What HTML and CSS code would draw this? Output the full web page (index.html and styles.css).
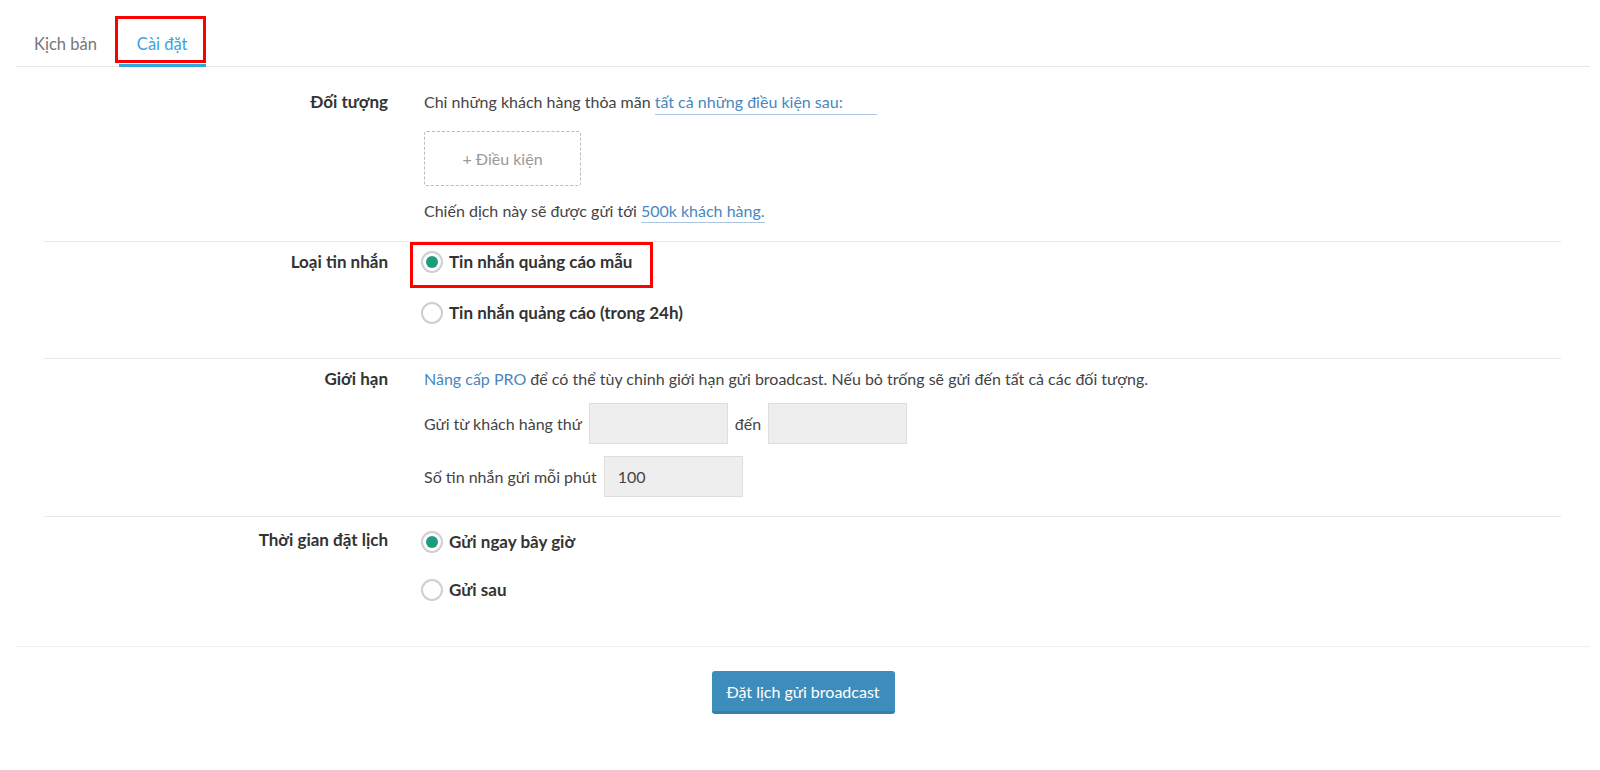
FILE: index.html
```html
<!DOCTYPE html>
<html lang="vi">
<head>
    <meta charset="UTF-8">
    <meta name="viewport" content="width=device-width, initial-scale=1.0">
    <title>Cài đặt broadcast</title>
    <link rel="stylesheet" href="styles.css">
</head>
<body>
    <div class="page">
        <div class="tabs">
            <div class="tab">Kịch bản</div>
            <div class="tab active marked-tab">Cài đặt</div>
        </div>

        <div class="settings">
            <div class="row row-first">
                <div class="row-label">Đối tượng</div>
                <div class="row-body">
                    <div class="line">Chỉ những khách hàng thỏa mãn <span class="link link-wide">tất cả những điều kiện sau:</span></div>
                    <div class="add-condition">+ Điều kiện</div>
                    <div class="line">Chiến dịch này sẽ được gửi tới <span class="link">500k khách hàng.</span></div>
                </div>
            </div>

            <div class="row row-type">
                <div class="row-label">Loại tin nhắn</div>
                <div class="row-body">
                    <div class="radio checked marked-radio"><span class="dot"></span>Tin nhắn quảng cáo mẫu</div>
                    <div class="radio"><span class="dot"></span>Tin nhắn quảng cáo (trong 24h)</div>
                </div>
            </div>

            <div class="row row-limit">
                <div class="row-label">Giới hạn</div>
                <div class="row-body">
                    <div class="line"><span class="plain-link">Nâng cấp PRO</span> để có thể tùy chỉnh giới hạn gửi broadcast. Nếu bỏ trống sẽ gửi đến tất cả các đối tượng.</div>
                    <div class="field-line">
                        <span>Gửi từ khách hàng thứ</span>
                        <div class="input"></div>
                        <span>đến</span>
                        <div class="input"></div>
                    </div>
                    <div class="field-line">
                        <span>Số tin nhắn gửi mỗi phút</span>
                        <div class="input">100</div>
                    </div>
                </div>
            </div>

            <div class="row row-time">
                <div class="row-label">Thời gian đặt lịch</div>
                <div class="row-body">
                    <div class="radio checked"><span class="dot"></span>Gửi ngay bây giờ</div>
                    <div class="radio"><span class="dot"></span>Gửi sau</div>
                </div>
            </div>
        </div>

        <div class="footer">
            <button class="btn-primary">Đặt lịch gửi broadcast</button>
        </div>
    </div>
</body>
</html>
```

FILE: styles.css
```css
body {
    margin: 0;
    font-family: "Lato", "Liberation Sans", sans-serif;
    font-size: 16px;
    color: #444;
    background: #fff;
}
.page {
    padding: 0 10px 0 16px;
}
.tabs {
    display: flex;
    padding-top: 34px;
    border-bottom: 1px solid #e6e6e6;
}
.tab {
    padding: 0 18px 12px;
    margin-right: 4px;
    line-height: 20px;
    font-size: 16.5px;
    color: #777;
}
.tab.active {
    color: #3aa3d9;
    border-bottom: 3px solid #2ea6de;
    margin-bottom: -1px;
    padding-bottom: 10px;
}
.marked-tab,
.marked-radio {
    position: relative;
}
.marked-tab::after {
    content: "";
    position: absolute;
    left: -4px;
    right: 0;
    top: -18px;
    bottom: 1px;
    border: 3px solid #f00;
}
.marked-radio::after {
    content: "";
    position: absolute;
    left: -11px;
    right: -21px;
    top: -9px;
    bottom: -15px;
    border: 3px solid #f00;
}
.settings {
    padding: 0 29px 0 28px;
}
.row {
    display: grid;
    grid-template-columns: 344px 1fr;
    column-gap: 36px;
    border-bottom: 1px solid #e6e9ee;
    line-height: 22px;
}
.row-label {
    text-align: right;
    font-weight: bold;
    font-size: 17px;
    color: #333;
}
.row-first {
    padding: 24px 0 19px;
}
.row-type {
    padding: 9px 0 34px;
}
.row-limit {
    padding: 9px 0 19px;
}
.row-time {
    padding: 14px 0 45px;
    border-bottom: none;
}
.row-time .row-label {
    margin-top: -2px;
}
.link {
    color: #4a86c0;
    border-bottom: 1px solid #a9c5e2;
    padding-bottom: 2px;
}
.link-wide {
    display: inline-block;
    width: 222px;
    line-height: 20px;
}
.plain-link {
    color: #4a86c0;
}
.add-condition {
    width: 157px;
    height: 55px;
    box-sizing: border-box;
    margin: 16px 0 14px;
    border: 1px dashed #bbb;
    border-radius: 3px;
    display: flex;
    align-items: center;
    justify-content: center;
    color: #999;
}
.radio {
    display: flex;
    width: max-content;
    align-items: center;
    font-weight: bold;
    font-size: 17px;
    color: #333;
    height: 22px;
    margin-left: -3px;
}
.radio + .radio {
    margin-top: 29px;
}
.row-time .radio + .radio {
    margin-top: 26px;
}
.dot {
    box-sizing: border-box;
    width: 22px;
    height: 22px;
    border: 2px solid #cfcfcf;
    border-radius: 50%;
    margin-right: 6px;
    background: #fff;
    display: flex;
    align-items: center;
    justify-content: center;
}
.radio.checked .dot::before {
    content: "";
    width: 12px;
    height: 12px;
    border-radius: 50%;
    background: #1b9c7e;
}
.field-line {
    display: flex;
    align-items: center;
    gap: 7px;
    margin-top: 13px;
}
.field-line + .field-line {
    margin-top: 12px;
}
.input {
    box-sizing: border-box;
    width: 139px;
    height: 41px;
    background: #eee;
    border: 1px solid #ddd;
    padding: 0 13px;
    display: flex;
    align-items: center;
}
.footer {
    border-top: 1px solid #f0f0f0;
    padding-top: 24px;
    display: flex;
    justify-content: center;
}
.btn-primary {
    width: 183px;
    height: 43px;
    background: #3c8dbc;
    border: none;
    border-bottom: 3px solid #367fa9;
    border-radius: 3px;
    color: #fff;
    font-family: "Lato", "Liberation Sans", sans-serif;
    font-size: 16px;
    cursor: pointer;
}
```
